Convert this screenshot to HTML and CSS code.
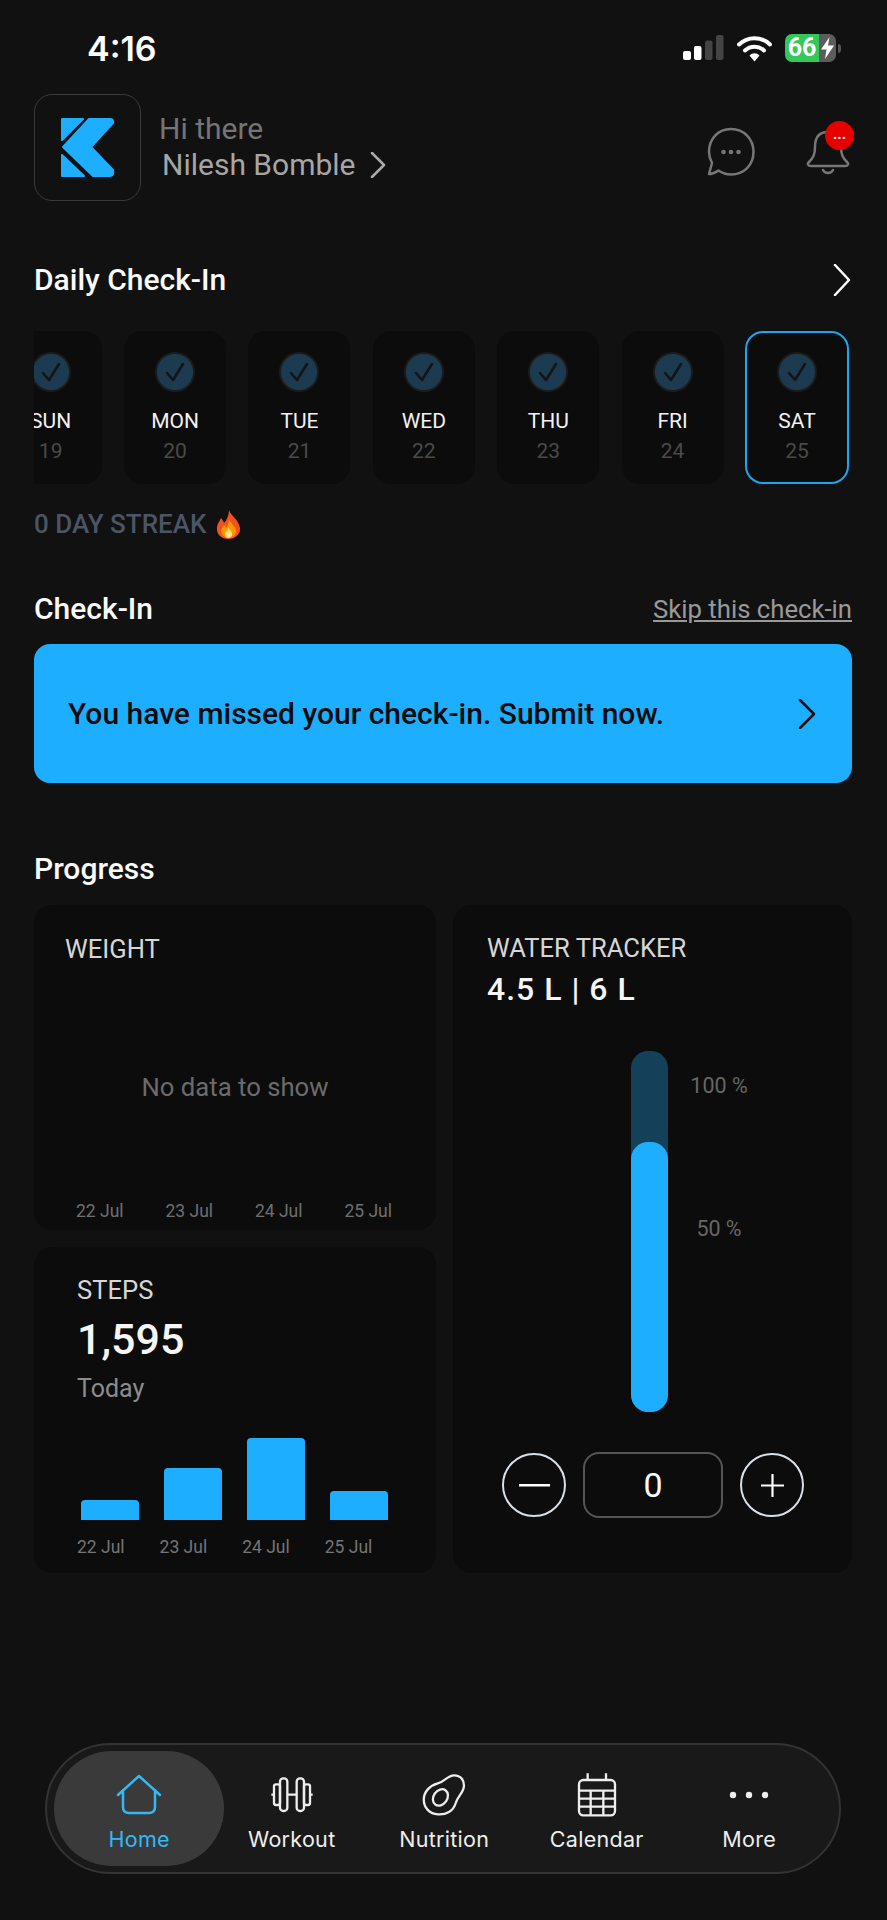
FILE: index.html
```html
<!DOCTYPE html>
<html lang="en">
<head>
    <meta charset="UTF-8">
    <meta name="viewport" content="width=device-width, initial-scale=1.0">
    <title>Home</title>
    <link rel="stylesheet" href="styles.css">
</head>
<body>
<div class="page">
    <!-- status bar -->
    <div class="status">
        <span class="clock">4:16</span>
        <div class="status-icons">
            <svg class="signal" width="41" height="26" viewBox="0 0 41 26">
                <rect x="0" y="16" width="8" height="9" rx="2" fill="#fff"/>
                <rect x="11" y="11" width="7.500" height="14" rx="2" fill="#fff"/>
                <rect x="22" y="5.500" width="7.500" height="19.500" rx="2" fill="#444"/>
                <rect x="33" y="0" width="7.500" height="25" rx="2" fill="#444"/>
            </svg>
            <svg class="wifi" width="35" height="27" viewBox="0 0 35 27">
                <path d="M2 9.500C11 1 24 1 33 9.500" fill="none" stroke="#fff" stroke-width="4" stroke-linecap="round"/>
                <path d="M8 15.500C13.500 10.500 21.500 10.500 27 15.500" fill="none" stroke="#fff" stroke-width="4" stroke-linecap="round"/>
                <path d="M12.500 20.500C15.500 17.500 19.500 17.500 22.500 20.500L17.500 26.500Z" fill="#fff"/>
            </svg>
            <div class="battery">
                <div class="battery-level">66</div>
                <div class="battery-rest">
                    <svg width="13" height="22" viewBox="0 0 13 22"><path d="M8.500 0L0 12.500H5.500L4 22L13 8.500H7Z" fill="#fff"/></svg>
                </div>
                <span class="battery-nub"></span>
            </div>
        </div>
    </div>

    <!-- header -->
    <div class="header">
        <div class="logo-box">
            <svg width="55" height="61" viewBox="-1 -1 55 61">
                <g fill="#1eaeff" stroke="#1eaeff" stroke-width="2" stroke-linejoin="round">
                    <path d="M1 1H22L1 22Z"/>
                    <path d="M1 37L23 58H1Z"/>
                    <path d="M28 1H49Q53 1 52 5L30 29L52 52Q53 58 49 58H32L2 29Z"/>
                </g>
            </svg>
        </div>
        <div class="greeting">
            <div class="hi">Hi there</div>
            <div class="name">Nilesh Bomble
                <svg width="16" height="26" viewBox="0 0 16 26"><path d="M2 1L14 13L2 25" fill="none" stroke="#aaa" stroke-width="2.500" stroke-linecap="round" stroke-linejoin="round"/></svg>
            </div>
        </div>
        <div class="header-icons">
            <svg width="50" height="50" viewBox="0 0 50 50">
                <path d="M25 2C12 2 3 12 3 25C3 30 4.500 33 6 36L3 47C7 47 10 45 12.500 43.500C16 46 20 47.500 25 47.500C38 47.500 47.500 38 47.500 25C47.500 12 38 2 25 2Z" fill="none" stroke="#777" stroke-width="2.500" stroke-linejoin="round"/>
                <circle cx="17.500" cy="25" r="2.300" fill="#777"/>
                <circle cx="25" cy="25" r="2.300" fill="#777"/>
                <circle cx="32.500" cy="25" r="2.300" fill="#777"/>
            </svg>
            <div class="bell">
                <svg width="44" height="46" viewBox="0 0 44 46">
                    <path d="M22 3C12 3 9 10 9 18C9 26 7 29 3 33C1 35 2 37 5 37H39C42 37 43 35 41 33C37 29 35 26 35 18C35 10 32 3 22 3Z" fill="none" stroke="#777" stroke-width="2.500" stroke-linejoin="round"/>
                    <path d="M17 41C19 45 25 45 27 41" fill="none" stroke="#777" stroke-width="2.500" stroke-linecap="round"/>
                </svg>
                <span class="badge">...</span>
            </div>
        </div>
    </div>

    <!-- daily check-in -->
    <div class="section-head daily-head">
        <h2>Daily Check-In</h2>
        <svg width="18" height="32" viewBox="0 0 18 32"><path d="M2 1L16 16L2 31" fill="none" stroke="#fff" stroke-width="2.500" stroke-linecap="round" stroke-linejoin="round"/></svg>
    </div>
    <div class="days">
        <div class="day">
            <span class="tick"><svg width="20" height="20" viewBox="0 0 20 20"><path d="M2 11L8 18L18 2" fill="none" stroke="#141414" stroke-width="2.500" stroke-linecap="round" stroke-linejoin="round"/></svg></span>
            <span class="day-name">SUN</span><span class="day-num">19</span>
        </div>
        <div class="day">
            <span class="tick"><svg width="20" height="20" viewBox="0 0 20 20"><path d="M2 11L8 18L18 2" fill="none" stroke="#141414" stroke-width="2.500" stroke-linecap="round" stroke-linejoin="round"/></svg></span>
            <span class="day-name">MON</span><span class="day-num">20</span>
        </div>
        <div class="day">
            <span class="tick"><svg width="20" height="20" viewBox="0 0 20 20"><path d="M2 11L8 18L18 2" fill="none" stroke="#141414" stroke-width="2.500" stroke-linecap="round" stroke-linejoin="round"/></svg></span>
            <span class="day-name">TUE</span><span class="day-num">21</span>
        </div>
        <div class="day">
            <span class="tick"><svg width="20" height="20" viewBox="0 0 20 20"><path d="M2 11L8 18L18 2" fill="none" stroke="#141414" stroke-width="2.500" stroke-linecap="round" stroke-linejoin="round"/></svg></span>
            <span class="day-name">WED</span><span class="day-num">22</span>
        </div>
        <div class="day">
            <span class="tick"><svg width="20" height="20" viewBox="0 0 20 20"><path d="M2 11L8 18L18 2" fill="none" stroke="#141414" stroke-width="2.500" stroke-linecap="round" stroke-linejoin="round"/></svg></span>
            <span class="day-name">THU</span><span class="day-num">23</span>
        </div>
        <div class="day">
            <span class="tick"><svg width="20" height="20" viewBox="0 0 20 20"><path d="M2 11L8 18L18 2" fill="none" stroke="#141414" stroke-width="2.500" stroke-linecap="round" stroke-linejoin="round"/></svg></span>
            <span class="day-name">FRI</span><span class="day-num">24</span>
        </div>
        <div class="day selected">
            <span class="tick"><svg width="20" height="20" viewBox="0 0 20 20"><path d="M2 11L8 18L18 2" fill="none" stroke="#141414" stroke-width="2.500" stroke-linecap="round" stroke-linejoin="round"/></svg></span>
            <span class="day-name">SAT</span><span class="day-num">25</span>
        </div>
    </div>
    <div class="streak">0 DAY STREAK
        <svg width="25" height="29" viewBox="0 0 25 29">
            <path d="M13 0C15 6 23 10 24 18C25 24 19 29 12.500 29C6 29 0 25 1 17C1.500 13 4 11 5 8C7 10 7.500 12 8 13C11 10 13 5 13 0Z" fill="#f4511e"/>
            <path d="M13 9C14 13 20 16 20 21C20 25 16 28 12.500 28C9 28 5 25 5 21C5 18 7 17 8 15C9 16 10 17 10 18C12 16 13 12 13 9Z" fill="#ff9800"/>
            <path d="M12.500 17C13 20 16 21 16 24C16 26.500 14 28 12.500 28C10.500 28 9 26.500 9 24.500C9 22 12 20.500 12.500 17Z" fill="#ffe082"/>
        </svg>
    </div>

    <!-- check-in -->
    <div class="section-head checkin-head">
        <h2>Check-In</h2>
        <a class="skip">Skip this check-in</a>
    </div>
    <div class="banner">
        <span>You have missed your check-in. Submit now.</span>
        <svg width="18" height="30" viewBox="0 0 18 30"><path d="M2 1L16 15L2 29" fill="none" stroke="#0c0c0c" stroke-width="2.500" stroke-linecap="round" stroke-linejoin="round"/></svg>
    </div>

    <!-- progress -->
    <div class="section-head progress-head"><h2>Progress</h2></div>
    <div class="progress">
        <div class="progress-left">
            <div class="card weight">
                <div class="card-title">WEIGHT</div>
                <div class="no-data">No data to show</div>
                <div class="weight-dates">
                    <span>22 Jul</span><span>23 Jul</span><span>24 Jul</span><span>25 Jul</span>
                </div>
            </div>
            <div class="card steps">
                <div class="card-title">STEPS</div>
                <div class="steps-value">1,595</div>
                <div class="steps-sub">Today</div>
                <div class="bars">
                    <div class="bar" style="height: 20px"></div>
                    <div class="bar" style="height: 52px"></div>
                    <div class="bar" style="height: 82px"></div>
                    <div class="bar" style="height: 29px"></div>
                </div>
                <div class="bar-dates">
                    <span>22 Jul</span><span>23 Jul</span><span>24 Jul</span><span>25 Jul</span>
                </div>
            </div>
        </div>
        <div class="card water">
            <div class="card-title">WATER TRACKER</div>
            <div class="water-value">4.5 L | 6 L</div>
            <div class="tank-row">
                <div class="tank"><div class="tank-fill"></div></div>
                <div class="ticks"><span>100 %</span><span>50 %</span></div>
            </div>
            <div class="water-controls">
                <button class="round-btn"><svg width="31" height="3" viewBox="0 0 31 3"><rect width="31" height="2.500" fill="#fff"/></svg></button>
                <div class="water-input">0</div>
                <button class="round-btn"><svg width="23" height="23" viewBox="0 0 23 23"><path d="M11.500 0V23M0 11.500H23" stroke="#fff" stroke-width="2.200"/></svg></button>
            </div>
        </div>
    </div>

    <!-- bottom nav -->
    <div class="nav">
        <div class="nav-item active">
            <svg width="46" height="42" viewBox="0 0 46 42">
                <path d="M2 21L23 2L44 21M7 16V33C7 37 9 39 13 39H33C37 39 39 37 39 33V16" fill="none" stroke="#33b8f8" stroke-width="2.500" stroke-linecap="round" stroke-linejoin="round"/>
            </svg>
            <span>Home</span>
        </div>
        <div class="nav-item">
            <svg width="44" height="42" viewBox="0 0 132 126">
                <g fill="none" stroke="#eee" stroke-width="7" stroke-linejoin="round">
                    <rect x="12" y="31" width="18" height="62" rx="6"/>
                    <rect x="30" y="13" width="22" height="98" rx="10"/>
                    <rect x="80" y="13" width="22" height="98" rx="10"/>
                    <rect x="102" y="31" width="18" height="62" rx="6"/>
                    <path d="M52 62H80M4 62H12M120 62H128"/>
                </g>
            </svg>
            <span>Workout</span>
        </div>
        <div class="nav-item">
            <svg width="46" height="45" viewBox="540 33 138 135">
                <path d="M640 40C660 40 672 55 670 75C668 95 650 105 645 125C638 150 615 162 590 160C565 158 547 140 547 115C547 90 565 72 590 65C610 60 620 40 640 40Z" fill="none" stroke="#eee" stroke-width="7"/>
                <ellipse cx="598" cy="108" rx="21" ry="27" transform="rotate(35 598 108)" fill="none" stroke="#eee" stroke-width="7"/>
            </svg>
            <span>Nutrition</span>
        </div>
        <div class="nav-item">
            <svg width="40" height="44" viewBox="106 35 120 132">
                <g fill="none" stroke="#eee" stroke-width="7">
                    <rect x="112" y="56" width="108" height="106" rx="13"/>
                    <path d="M138 36V56M193 36V56M112 88H220M112 112H220M112 136H220M147 88V162M185 88V162"/>
                </g>
            </svg>
            <span>Calendar</span>
        </div>
        <div class="nav-item">
            <svg class="more-dots" width="40" height="42" viewBox="0 0 40 42">
                <circle cx="4" cy="21" r="3.200" fill="#eee"/>
                <circle cx="20" cy="21" r="3.200" fill="#eee"/>
                <circle cx="36" cy="21" r="3.200" fill="#eee"/>
            </svg>
            <span>More</span>
        </div>
    </div>
</div>
</body>
</html>
```

FILE: styles.css
```css
/* base */
* {
    box-sizing: border-box;
}

body {
    margin: 0;
    background-color: #111111;
    color: #fff;
    font-family: 'Roboto', sans-serif;
}

.page {
    width: 887px;
    height: 1920px;
    padding: 0 35px 0 34px;
    display: flex;
    flex-direction: column;
    overflow: hidden;
}

/* status bar */
.status {
    height: 94px;
    flex-shrink: 0;
    padding: 29px 11px 0 53px;
    display: flex;
    justify-content: space-between;
    align-items: flex-start;
}

.clock {
    font-family: 'Inter', sans-serif;
    font-size: 34px;
    font-weight: 600;
    line-height: 40px;
}

.status-icons {
    display: flex;
    align-items: center;
    gap: 13px;
    margin-top: 5px;
}

.battery {
    width: 56px;
    height: 28px;
    display: flex;
    align-items: stretch;
}

.battery-level {
    width: 34px;
    background-color: #34c759;
    border-radius: 7px 0 0 7px;
    font-size: 25px;
    font-weight: 700;
    line-height: 28px;
    text-align: center;
}

.battery-rest {
    width: 17px;
    background-color: #5c5c5c;
    border-radius: 0 7px 7px 0;
    display: flex;
    align-items: center;
    justify-content: center;
}

.battery-nub {
    width: 3px;
    height: 9px;
    background-color: #555;
    border-radius: 0 3px 3px 0;
    align-self: center;
    margin-left: 2px;
}

/* header */
.header {
    height: 107px;
    flex-shrink: 0;
    display: flex;
    align-items: center;
}

.logo-box {
    width: 107px;
    height: 107px;
    border: 1.5px solid #3a3a3a;
    border-radius: 18px;
    display: flex;
    align-items: center;
    justify-content: center;
}

.greeting {
    margin-left: 18px;
}

.hi {
    font-size: 30px;
    line-height: 34px;
    color: #757575;
}

.name {
    margin-top: 1px;
    margin-left: 3px;
    font-size: 30px;
    line-height: 36px;
    color: #a6a6a6;
    display: flex;
    align-items: center;
    gap: 14px;
}

.header-icons {
    margin-left: auto;
    margin-right: 2px;
    display: flex;
    align-items: center;
    gap: 50px;
    padding-top: 8px;
}

.bell {
    position: relative;
    display: flex;
}

.badge {
    position: absolute;
    top: -8px;
    right: -4px;
    width: 29px;
    height: 29px;
    border-radius: 50%;
    background-color: #e60000;
    color: #fff;
    font-size: 15px;
    font-weight: 700;
    line-height: 26px;
    text-align: center;
}

/* section titles */
.section-head {
    display: flex;
    justify-content: space-between;
    align-items: center;
    flex-shrink: 0;
}

.section-head h2 {
    margin: 0;
    font-size: 30px;
    font-weight: 500;
    line-height: 36px;
    color: #fafafa;
}

.daily-head {
    margin-top: 61px;
}

.daily-head svg {
    margin-right: 1px;
}

/* week strip */
.days {
    margin-top: 33px;
    height: 153px;
    padding-right: 4px;
    flex-shrink: 0;
    display: flex;
    justify-content: flex-end;
    gap: 22.400px;
    overflow: hidden;
}

.day {
    width: 102px;
    height: 153px;
    flex-shrink: 0;
    background-color: #0c0c0c;
    border-radius: 18px;
    display: flex;
    flex-direction: column;
    align-items: center;
    padding-top: 23px;
}

.day.selected {
    width: 104px;
    margin: 0 -1px;
    border: 2.500px solid #1aa7ef;
    padding-top: 20.500px;
}

.tick {
    width: 36px;
    height: 36px;
    flex-shrink: 0;
    border-radius: 50%;
    background-color: #1c3b50;
    box-shadow: 0 0 0 2px #1c1c1c;
    display: flex;
    align-items: center;
    justify-content: center;
}

.day-name {
    margin-top: 17px;
    font-size: 21px;
    line-height: 28px;
    color: #f2f2f2;
}

.day-num {
    margin-top: 2px;
    font-size: 21px;
    line-height: 28px;
    color: #4a4a4a;
}

.streak {
    margin-top: 26px;
    height: 28px;
    flex-shrink: 0;
    display: flex;
    align-items: center;
    gap: 10px;
    font-size: 26px;
    font-weight: 500;
    color: #4b5567;
}

/* check-in */
.checkin-head {
    margin-top: 53px;
}

.skip {
    font-size: 25.700px;
    color: #999;
    text-decoration: underline;
}

.banner {
    margin-top: 17px;
    height: 139px;
    flex-shrink: 0;
    background-color: #1eaeff;
    border-radius: 16px;
    padding: 0 36px 0 34px;
    display: flex;
    align-items: center;
    justify-content: space-between;
    font-size: 30px;
    font-weight: 500;
    color: #0c0c0c;
}

/* progress */
.progress-head {
    margin-top: 68px;
}

.progress {
    margin-top: 18px;
    height: 668px;
    flex-shrink: 0;
    display: flex;
    gap: 17px;
}

.progress-left {
    width: 402px;
    display: flex;
    flex-direction: column;
    gap: 17px;
}

.card {
    background-color: #0c0c0c;
    border-radius: 18px;
}

.card-title {
    font-size: 25.600px;
    line-height: 30px;
    color: #d6d6d6;
}

.weight {
    height: 325px;
    padding: 29px 31px 0 31px;
    display: flex;
    flex-direction: column;
}

.no-data {
    margin-top: 107px;
    text-align: center;
    font-size: 25.700px;
    line-height: 32px;
    color: #6b6b6b;
}

.weight-dates {
    margin-top: 97px;
    padding: 0 13px 0 11px;
    display: flex;
    justify-content: space-between;
    font-size: 17.500px;
    line-height: 22px;
    color: #6f6f6f;
}

.steps {
    height: 326px;
    padding: 28px 0 0 43px;
}

.steps-value {
    margin-top: 9px;
    font-size: 43px;
    font-weight: 500;
    line-height: 50px;
    color: #f5f5f5;
}

.steps-sub {
    margin-top: 9px;
    font-size: 25px;
    line-height: 32px;
    color: #8c8c8c;
}

.bars {
    margin-top: 33px;
    margin-left: 4px;
    height: 82px;
    display: flex;
    align-items: flex-end;
    gap: 25px;
}

.bar {
    width: 58px;
    background-color: #1eaeff;
    border-radius: 4px 4px 0 0;
}

.bar-dates {
    margin-top: 16px;
    display: flex;
    gap: 35px;
    font-size: 17.500px;
    line-height: 22px;
    color: #757575;
}

.water {
    flex: 1;
    padding: 28px 0 0 34px;
}

.water-value {
    margin-top: 8px;
    font-size: 32px;
    font-weight: 500;
    line-height: 36px;
    letter-spacing: 1px;
    color: #f5f5f5;
}

.tank-row {
    margin-top: 44px;
    margin-left: 144px;
    display: flex;
    gap: 21px;
}

.tank {
    width: 37px;
    height: 361px;
    background-color: #15405a;
    border-radius: 17px;
    display: flex;
    align-items: flex-end;
}

.tank-fill {
    width: 100%;
    height: 270px;
    background-color: #1eaeff;
    border-radius: 17px;
}

.ticks {
    width: 60px;
    padding-top: 25px;
    display: flex;
    flex-direction: column;
    align-items: center;
    gap: 123px;
    font-size: 21.500px;
    line-height: 20px;
    white-space: nowrap;
    color: #666;
}

.water-controls {
    margin-top: 40px;
    margin-left: 15px;
    display: flex;
    align-items: center;
    gap: 17px;
}

.round-btn {
    width: 64px;
    height: 64px;
    padding: 0;
    background: none;
    border: 2px solid #d8e0ea;
    border-radius: 50%;
    display: flex;
    align-items: center;
    justify-content: center;
}

.water-input {
    width: 140px;
    height: 66px;
    border: 2px solid #555;
    border-radius: 16px;
    font-size: 34px;
    line-height: 62px;
    text-align: center;
    color: #fafafa;
}

/* bottom nav */
.nav {
    margin-top: auto;
    margin-bottom: 46px;
    margin-left: 11px;
    width: 796px;
    height: 131px;
    flex-shrink: 0;
    background-color: #191919;
    border: 2px solid #333;
    border-radius: 66px;
    padding-left: 16px;
    display: flex;
}

.nav-item {
    width: 152.500px;
    position: relative;
    display: flex;
    flex-direction: column;
    align-items: center;
    padding-top: 28px;
    font-family: 'Inter', sans-serif;
    font-size: 21.500px;
    font-weight: 400;
    color: #eee;
}

.nav-item svg {
    height: 44px;
    position: relative;
}

.nav-item span {
    margin-top: 9px;
    line-height: 26px;
    letter-spacing: 0.300px;
    position: relative;
}

.nav-item.active {
    color: #33b8f8;
}

/* highlight behind the active tab */
.nav-item.active::before {
    content: '';
    position: absolute;
    top: 6px;
    bottom: 6px;
    left: -9px;
    right: -8px;
    background-color: #3a3a3a;
    border-radius: 58px;
}
```
